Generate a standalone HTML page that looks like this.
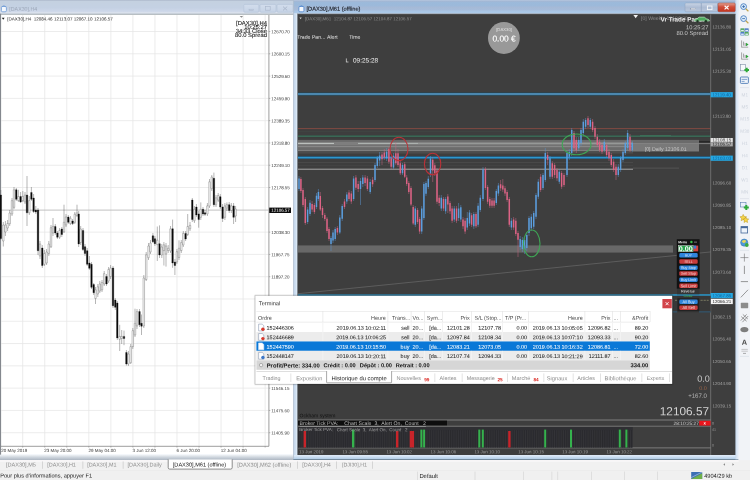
<!DOCTYPE html>
<html lang="fr">
<head>
<meta charset="utf-8">
<title>MetaTrader - [DAX30],M61 (offline)</title>
<style>
html,body{margin:0;padding:0;}
body{width:750px;height:480px;overflow:hidden;position:relative;background:#f0f0f0;}
#app{position:absolute;left:0;top:0;width:750px;height:480px;overflow:hidden;
 font-family:"Liberation Sans",sans-serif;}
#app>section,#app>aside,#app>footer,#app>div{position:absolute;left:0;top:0;width:750px;height:480px;}
#app svg{position:absolute;left:0;top:0;display:block;}
#app text{font-family:"Liberation Sans",sans-serif;white-space:pre;}
</style>
</head>
<body>
<div id="app">
<svg width="0" height="0" style="position:absolute"><defs>
<filter id="aa" filterUnits="userSpaceOnUse" x="0" y="0" width="750" height="480"><feOffset dx="0" dy="0"/></filter>
<linearGradient id="gTitle" x1="0" y1="0" x2="0" y2="1">
<stop offset="0" stop-color="#a9b5c8"/><stop offset="0.09" stop-color="#c4d1e0"/><stop offset="0.55" stop-color="#c4d1e3"/>
<stop offset="0.82" stop-color="#cdd7e9"/><stop offset="0.93" stop-color="#dce3ed"/><stop offset="1" stop-color="#dfe5ee"/>
</linearGradient>
<linearGradient id="gTitleA" x1="0" y1="0" x2="0" y2="1"><stop offset="0" stop-color="#b8c8df"/><stop offset="0.09" stop-color="#a3b7d4"/><stop offset="0.2" stop-color="#9bbadb"/><stop offset="0.42" stop-color="#9db9da"/><stop offset="0.52" stop-color="#a5b9d6"/><stop offset="0.7" stop-color="#a6bcda"/><stop offset="0.8" stop-color="#a9c6e6"/><stop offset="0.9" stop-color="#abc9e8"/><stop offset="0.95" stop-color="#c6d9ee"/><stop offset="1" stop-color="#c8daef"/></linearGradient>
<linearGradient id="gLB" x1="0" y1="0" x2="0" y2="1"><stop offset="0" stop-color="#f0f3f6"/><stop offset="0.45" stop-color="#ced5dd"/><stop offset="1" stop-color="#aab4c0"/></linearGradient>
<linearGradient id="gBF" x1="0" y1="0" x2="0" y2="1"><stop offset="0" stop-color="#e2ecf8"/><stop offset="0.35" stop-color="#d3e3f4"/><stop offset="1" stop-color="#b1cde7"/></linearGradient>
<linearGradient id="gRF" x1="0" y1="0" x2="1" y2="0"><stop offset="0" stop-color="#c6d9ee"/><stop offset="1" stop-color="#eef3fa"/></linearGradient>
<linearGradient id="gBtn" x1="0" y1="0" x2="0" y2="1">
<stop offset="0" stop-color="#c9d5e6"/><stop offset="0.5" stop-color="#adbcd3"/><stop offset="1" stop-color="#bac8dd"/>
</linearGradient>
<linearGradient id="gBtnOff" x1="0" y1="0" x2="0" y2="1">
<stop offset="0" stop-color="#d2ddec"/><stop offset="1" stop-color="#c6d3e6"/>
</linearGradient>
<linearGradient id="gClose" x1="0" y1="0" x2="0" y2="1">
<stop offset="0" stop-color="#e2a293"/><stop offset="0.45" stop-color="#cf4d39"/><stop offset="1" stop-color="#c3331f"/>
</linearGradient>
</defs></svg>

<section id="win-h4">
<svg width="750" height="480" viewBox="0 0 750 480"><g filter="url(#aa)">
<rect x="0" y="0" width="750" height="460" fill="#c9dbef"/>
<rect x="0" y="0" width="297" height="13.8" fill="url(#gTitle)"/>
<rect x="1.4" y="6.4" width="5" height="5.4" rx="1.2" fill="#f4f8fd" stroke="#6a98d4" stroke-width="0.8"/><path d="M2 6.8Q3.9 4.9 5.8 6.8" fill="none" stroke="#6a98d4" stroke-width="0.8"/>
<text x="9.3" y="10.7" font-size="5.3" fill="#9ca7b8" transform="rotate(0.03 9.3 10.7)">[DAX30],H4</text>
<rect x="243.8" y="4.4" width="15" height="7.8" rx="1" fill="url(#gBtnOff)" stroke="#b4c2d7" stroke-width="0.6"/>
<rect x="260" y="4.4" width="16" height="7.8" rx="1" fill="url(#gBtnOff)" stroke="#b4c2d7" stroke-width="0.6"/>
<rect x="277" y="4.4" width="16" height="7.8" rx="1" fill="url(#gBtnOff)" stroke="#b4c2d7" stroke-width="0.6"/>
<rect x="249" y="9.2" width="4.6" height="1.3" fill="none" stroke="#a9b6ca" stroke-width="0.5"/><rect x="265.6" y="6.6" width="4.6" height="3.6" fill="none" stroke="#a9b6ca" stroke-width="0.6"/><path d="M283 6.6L287.2 10.4M287.2 6.6L283 10.4" stroke="#a9b6ca" stroke-width="0.9" fill="none"/>
<rect x="0" y="13.7" width="293.4" height="1.2" fill="#a3aaae"/>
<rect x="0" y="14.8" width="293.4" height="440" fill="#ffffff"/>
<rect x="0" y="13.7" width="1.1" height="441.1" fill="#84888e"/>
<rect x="0" y="454.8" width="293.3" height="5.4" fill="url(#gLB)"/>
<path d="M22.7 15V445.8M44.74 15V445.8M66.78 15V445.8M88.82 15V445.8M110.86 15V445.8M132.9 15V445.8M154.94 15V445.8M176.98 15V445.8M199.02 15V445.8M221.06 15V445.8M243.1 15V445.8M265.14 15V445.8M1 31.5H268.4M1 53.79H268.4M1 76.08H268.4M1 98.37H268.4M1 120.66H268.4M1 142.95H268.4M1 165.24H268.4M1 187.53H268.4M1 232.11H268.4M1 254.4H268.4M1 276.69H268.4M1 298.98H268.4M1 321.27H268.4M1 343.56H268.4M1 365.85H268.4M1 388.14H268.4M1 410.43H268.4M1 432.72H268.4" stroke="#e5e5e5" stroke-width="0.75" fill="none"/>
<path d="M1 210.1H268.4" stroke="#b6b6b6" stroke-width="0.85"/>
<path d="M268.9 15V446.3M1 446.3H268.9" stroke="#747474" stroke-width="0.7" fill="none"/>
<path d="M268.9 31.5h1.4M268.9 53.79h1.4M268.9 76.08h1.4M268.9 98.37h1.4M268.9 120.66h1.4M268.9 142.95h1.4M268.9 165.24h1.4M268.9 187.53h1.4M268.9 209.82h1.4M268.9 232.11h1.4M268.9 254.4h1.4M268.9 276.69h1.4M268.9 298.98h1.4M268.9 321.27h1.4M268.9 343.56h1.4M268.9 365.85h1.4M268.9 388.14h1.4M268.9 410.43h1.4M268.9 432.72h1.4M22.7 446.3v1.3M44.74 446.3v1.3M66.78 446.3v1.3M88.82 446.3v1.3M110.86 446.3v1.3M132.9 446.3v1.3M154.94 446.3v1.3M176.98 446.3v1.3M199.02 446.3v1.3M221.06 446.3v1.3M243.1 446.3v1.3M265.14 446.3v1.3" stroke="#777" stroke-width="0.5" fill="none"/>
<path d="M0.8 190V240M3.3 222V246.5M5.4 221V236M7.6 220V231M9.7 210V226M12 198V216M14 187V209M16.3 188V201M18.4 189.8V202M20.6 192V203M22.8 191V202M25 192V204M27 176V226M29.3 196V215M31.4 187V201M33.6 194V213M35.8 206V214M38 208V255M40 241V259M42.3 245V268M44.4 250V266M46.6 249V265M48.8 241V256M51 225V248M53 218V236M55.3 224V235M57.4 231V239M59.6 228V239M61.8 227V237M64 204.7V233M66 214V227M68.3 215V224M70.4 216V225M72.6 219V225M74.8 212V224M77 204.7V217M78.7 211V247M80.7 226V245M83 228V251M85 244V256M87.2 248V266M89.4 256V270M91.5 262V289M93.7 283V295M95.5 287V304M97.8 284V297M99.8 281V293M102 280V292M104.2 271V286M106.5 274V286M108.6 267V283M110.6 265V279M113 266V308M115.3 298V310M117.3 301V340M119.7 324.8V351M121.7 330V344M124 330.6V345.2M126.4 350V365.6M128.4 351V366M130.7 344V364M132.8 328V349M135 308.7V337M137 309V329M139.5 309V327M141.5 314.5V335M143.8 275V328M146.2 252V281M148.5 243V260M150.5 240V254M152.9 233V243M154.9 236V246M157.3 226.5V261M159.5 225.4V258M161.8 244V258M163.9 242V265.5M166 243V266.6M168.2 245V253M170.5 226V253M172.6 219.6V267.8M174.9 259V275M176.9 249V264M179 240.3V260M181.3 240V253M183.3 231V247M185.6 231V241M187.7 214V236M190 222V231M192.3 198V222M194.4 206V223M196.4 204V217M198.7 211V227.7M200.8 202.4V220M203 207V216M205 210V216M207.4 203V216M209.5 179V208M211.8 175V191M213.9 172.6V207M216 195V207M218.2 193V202M220.3 194V209M222.6 204V222M224.9 203V220M226.9 202.4V211M229.2 202V213M231.3 203V213M233.6 203V224M235.6 206V222" stroke="#505050" stroke-width="0.42" fill="none"/>
<path d="M2.55 225h1.5v16h-1.5zM4.65 225h1.5v7h-1.5zM6.85 223.5h1.5v4.5h-1.5zM8.95 213h1.5v10.7h-1.5zM11.25 200.6h1.5v13.4h-1.5zM13.25 189.8h1.5v17.6h-1.5zM17.65 196.5h1.5v4.1h-1.5zM22.05 196.5h1.5v4.1h-1.5zM24.25 195h1.5v7h-1.5zM28.55 200.6h1.5v12.2h-1.5zM39.25 244h1.5v12h-1.5zM43.65 253.5h1.5v10.8h-1.5zM45.85 252h1.5v11h-1.5zM48.05 244h1.5v9.5h-1.5zM50.25 227.7h1.5v19h-1.5zM52.25 226.4h1.5v6.6h-1.5zM58.85 230.4h1.5v6.8h-1.5zM63.25 222.3h1.5v9.5h-1.5zM65.25 217h1.5v8h-1.5zM69.65 218.2h1.5v5.4h-1.5zM74.05 214.2h1.5v8.1h-1.5zM76.25 212.8h1.5v2.7h-1.5zM79.95 229h1.5v13.6h-1.5zM94.75 289.8h1.5v8.7h-1.5zM97.05 286.8h1.5v7.2h-1.5zM99.05 284h1.5v7h-1.5zM101.25 282.5h1.5v7.3h-1.5zM103.45 273.7h1.5v10.3h-1.5zM107.85 269.4h1.5v11.6h-1.5zM109.85 268h1.5v8.6h-1.5zM118.95 336.4h1.5v2.9h-1.5zM120.95 336.4h1.5v2.1h-1.5zM127.65 354h1.5v10h-1.5zM129.95 346.6h1.5v16.1h-1.5zM132.05 330.6h1.5v16h-1.5zM134.25 323.3h1.5v11.7h-1.5zM136.25 311.6h1.5v14.4h-1.5zM143.05 278h1.5v48h-1.5zM145.45 254.8h1.5v24.8h-1.5zM147.75 246h1.5v11.7h-1.5zM149.75 243h1.5v8.9h-1.5zM156.55 240.2h1.5v4.4h-1.5zM161.05 247h1.5v8h-1.5zM163.15 244.9h1.5v5.7h-1.5zM165.25 246h1.5v8h-1.5zM167.45 248.3h1.5v2.3h-1.5zM169.75 228.8h1.5v22.2h-1.5zM176.15 251.7h1.5v10.3h-1.5zM178.25 248.3h1.5v9.2h-1.5zM180.55 242.6h1.5v8h-1.5zM182.55 233.4h1.5v11.5h-1.5zM186.95 226.5h1.5v8h-1.5zM189.25 225.4h1.5v3.4h-1.5zM193.65 209.3h1.5v11.5h-1.5zM200.05 209.3h1.5v8h-1.5zM206.65 205.9h1.5v8h-1.5zM208.75 181.8h1.5v24.1h-1.5zM211.05 177h1.5v11.7h-1.5zM215.25 197.8h1.5v6.9h-1.5zM217.45 195.5h1.5v4.6h-1.5zM224.15 205.9h1.5v11.4h-1.5zM226.15 204.7h1.5v3.5h-1.5zM230.55 205.9h1.5v4.6h-1.5zM234.85 209h1.5v7h-1.5z" fill="#ffffff" stroke="#5c5c5c" stroke-width="0.36"/>
<path d="M0.05 195h1.5v43.5h-1.5zM15.55 189.8h1.5v9.5h-1.5zM19.85 196.5h1.5v5.5h-1.5zM26.25 195h1.5v17.8h-1.5zM30.65 192.5h1.5v6.8h-1.5zM32.85 198h1.5v13.5h-1.5zM35.05 210h1.5v2h-1.5zM37.25 210h1.5v40.7h-1.5zM41.55 248h1.5v17.6h-1.5zM54.55 226.4h1.5v6.6h-1.5zM56.65 233h1.5v4.2h-1.5zM61.05 229h1.5v5.5h-1.5zM67.55 217h1.5v5.3h-1.5zM71.85 221h1.5v2.6h-1.5zM77.95 214h1.5v30h-1.5zM82.25 230.4h1.5v19h-1.5zM84.25 246.7h1.5v6.8h-1.5zM86.45 250.7h1.5v13.6h-1.5zM88.65 263h1.5v5.3h-1.5zM90.75 264.3h1.5v23h-1.5zM92.95 284.6h1.5v8.1h-1.5zM105.75 276.6h1.5v7.4h-1.5zM112.25 268h1.5v37.8h-1.5zM114.55 300h1.5v7.3h-1.5zM116.55 303h1.5v34.9h-1.5zM123.25 336.4h1.5v2.1h-1.5zM125.65 352.5h1.5v11.5h-1.5zM138.75 311.6h1.5v13.2h-1.5zM140.75 323.3h1.5v2.9h-1.5zM152.15 235.8h1.5v5.9h-1.5zM154.15 238.7h1.5v5h-1.5zM158.75 243.7h1.5v11.3h-1.5zM171.85 228.8h1.5v34.2h-1.5zM174.15 262h1.5v3.5h-1.5zM184.85 233.4h1.5v5.6h-1.5zM191.55 200h1.5v19.6h-1.5zM195.65 207h1.5v8h-1.5zM197.95 213.9h1.5v5.7h-1.5zM202.25 209.3h1.5v4.6h-1.5zM204.25 212.8h1.5v1.4h-1.5zM213.15 178.3h1.5v26.4h-1.5zM219.55 196.7h1.5v10.3h-1.5zM221.85 207h1.5v11.5h-1.5zM228.45 204.7h1.5v5.8h-1.5zM232.85 205.9h1.5v11.4h-1.5z" fill="#0a0a0a" stroke="#0a0a0a" stroke-width="0.3"/>
<path d="M239.7 15.9h3.4l-1.7 1.9z" fill="#8a8a8a"/>
<rect x="269.2" y="207.6" width="21.8" height="5.4" fill="#0c0c0c"/>
<path d="M1.8 17.8h2.8l-1.4 2z" fill="#1a1a1a"/>
<text x="7.3" y="20.53" font-size="4.54" fill="#262626" transform="rotate(0.03 7.3 20.53)">[DAX30],H4  12084.46 12113.07 12067.10 12106.57</text>
<text x="271.2" y="33.3" font-size="4.48" fill="#3a3a3a" transform="rotate(0.03 271.2 33.3)">12670.70</text>
<text x="271.2" y="55.59" font-size="4.48" fill="#3a3a3a" transform="rotate(0.03 271.2 55.59)">12600.15</text>
<text x="271.2" y="77.88" font-size="4.48" fill="#3a3a3a" transform="rotate(0.03 271.2 77.88)">12529.60</text>
<text x="271.2" y="100.17" font-size="4.48" fill="#3a3a3a" transform="rotate(0.03 271.2 100.17)">12459.90</text>
<text x="271.2" y="122.46" font-size="4.48" fill="#3a3a3a" transform="rotate(0.03 271.2 122.46)">12389.35</text>
<text x="271.2" y="144.75" font-size="4.48" fill="#3a3a3a" transform="rotate(0.03 271.2 144.75)">12318.80</text>
<text x="271.2" y="167.04" font-size="4.48" fill="#3a3a3a" transform="rotate(0.03 271.2 167.04)">12249.10</text>
<text x="271.2" y="189.33" font-size="4.48" fill="#3a3a3a" transform="rotate(0.03 271.2 189.33)">12178.55</text>
<text x="271.2" y="233.91" font-size="4.48" fill="#3a3a3a" transform="rotate(0.03 271.2 233.91)">12038.30</text>
<text x="271.2" y="256.2" font-size="4.48" fill="#3a3a3a" transform="rotate(0.03 271.2 256.2)">11967.75</text>
<text x="271.2" y="278.49" font-size="4.48" fill="#3a3a3a" transform="rotate(0.03 271.2 278.49)">11897.20</text>
<text x="271.2" y="300.78" font-size="4.48" fill="#3a3a3a" transform="rotate(0.03 271.2 300.78)">11826.65</text>
<text x="271.2" y="323.07" font-size="4.48" fill="#3a3a3a" transform="rotate(0.03 271.2 323.07)">11756.95</text>
<text x="271.2" y="345.36" font-size="4.48" fill="#3a3a3a" transform="rotate(0.03 271.2 345.36)">11686.40</text>
<text x="271.2" y="367.65" font-size="4.48" fill="#3a3a3a" transform="rotate(0.03 271.2 367.65)">11615.85</text>
<text x="271.2" y="389.94" font-size="4.48" fill="#3a3a3a" transform="rotate(0.03 271.2 389.94)">11546.15</text>
<text x="271.2" y="412.23" font-size="4.48" fill="#3a3a3a" transform="rotate(0.03 271.2 412.23)">11475.60</text>
<text x="271.2" y="434.52" font-size="4.48" fill="#3a3a3a" transform="rotate(0.03 271.2 434.52)">11405.90</text>
<text x="271.2" y="211.8" font-size="4.48" fill="#ffffff" transform="rotate(0.03 271.2 211.8)">12106.57</text>
<text x="236" y="25" font-size="5.87" fill="#141414" stroke="#141414" stroke-width="0.08" transform="rotate(0.03 236 25)">[DAX30],H4</text>
<text x="244.15" y="29" font-size="5.87" fill="#141414" stroke="#141414" stroke-width="0.08" transform="rotate(0.03 244.15 29)">10:25:27</text>
<text x="235.67" y="33" font-size="5.87" fill="#141414" stroke="#141414" stroke-width="0.08" transform="rotate(0.03 235.67 33)">34:33 Close</text>
<text x="235.01" y="37" font-size="5.87" fill="#141414" stroke="#141414" stroke-width="0.08" transform="rotate(0.03 235.01 37)">80.0 Spread</text>
<text x="1.3" y="452.01" font-size="4.5" fill="#3a3a3a" transform="rotate(0.03 1.3 452.01)">20 May 2019</text>
<text x="44.2" y="452.01" font-size="4.5" fill="#3a3a3a" transform="rotate(0.03 44.2 452.01)">23 May 20:00</text>
<text x="88.4" y="452.01" font-size="4.5" fill="#3a3a3a" transform="rotate(0.03 88.4 452.01)">29 May 04:00</text>
<text x="132.6" y="452.01" font-size="4.5" fill="#3a3a3a" transform="rotate(0.03 132.6 452.01)">3 Jun 12:00</text>
<text x="176.4" y="452.01" font-size="4.5" fill="#3a3a3a" transform="rotate(0.03 176.4 452.01)">6 Jun 20:00</text>
<text x="220.8" y="452.01" font-size="4.5" fill="#3a3a3a" transform="rotate(0.03 220.8 452.01)">12 Jun 04:00</text>
</g></svg>
</section>
<section id="win-m61">
<svg width="750" height="480" viewBox="0 0 750 480"><g filter="url(#aa)">
<rect x="293.4" y="0" width="445.6" height="13.9" fill="url(#gTitleA)"/>
<rect x="293.3" y="0" width="0.8" height="460" fill="#aebccd"/>
<rect x="295.8" y="13.9" width="1.3" height="441.6" fill="#dbe8f5"/>
<rect x="294.1" y="455" width="444.4" height="4.1" fill="url(#gBF)"/>
<rect x="293.3" y="459" width="445.2" height="1.2" fill="#748b9e"/>
<rect x="735.3" y="0" width="3.5" height="459.3" fill="url(#gRF)"/>
<rect x="297" y="13.9" width="438.4" height="441.1" fill="#3e3e3e"/>
<rect x="297" y="13.8" width="438.4" height="0.8" fill="#555555"/>
<rect x="297" y="14" width="0.8" height="441" fill="#8d959e"/>
<rect x="298.9" y="6.4" width="5" height="5.4" rx="1" fill="#f4f8fd" stroke="#4f86cf" stroke-width="0.8"/><path d="M299.5 6.8Q301.4 4.9 303.3 6.8" fill="none" stroke="#4f86cf" stroke-width="0.8"/>
<text x="306.5" y="10.73" font-size="5.66" fill="#161b22" stroke="#161b22" stroke-width="0.1" transform="rotate(0.03 306.5 10.73)">[DAX30],M61 (offline)</text>
<rect x="685" y="3" width="16.2" height="8.8" rx="1" fill="url(#gBtn)" stroke="#8fa2be" stroke-width="0.5"/><rect x="701.4" y="3" width="16.2" height="8.8" fill="url(#gBtn)" stroke="#8fa2be" stroke-width="0.5"/><rect x="718" y="3" width="17.2" height="8.8" rx="1" fill="url(#gClose)" stroke="#a04030" stroke-width="0.5"/><rect x="690.8" y="8.2" width="4.6" height="1.4" fill="#fff" stroke="#6b7890" stroke-width="0.3"/><rect x="707.4" y="6" width="4.6" height="3.6" fill="none" stroke="#f6f8fb" stroke-width="0.9"/><path d="M724.6 5.8L728.6 9.4M728.6 5.8L724.6 9.4" stroke="#fff" stroke-width="1.2" fill="none"/>
<rect x="298" y="92.2" width="412.6" height="3.7" fill="#2b444f"/>
<rect x="298" y="93" width="412.6" height="2.1" fill="#4b87ae"/>
<rect x="298" y="128.1" width="412.6" height="1" fill="#804a42"/>
<rect x="298" y="131.5" width="412.6" height="0.6" fill="#414b44"/>
<rect x="298" y="135.1" width="412.6" height="2.2" fill="#33403a"/>
<rect x="298" y="135.6" width="412.6" height="1.1" fill="#3e7a62"/>
<rect x="640" y="135.1" width="31" height="0.6" fill="#3f7f60"/>
<rect x="298" y="151.2" width="335" height="2.4" fill="#4c4c4c"/>
<rect x="298" y="139.9" width="401" height="11.3" fill="#6b6b6b"/>
<rect x="298" y="141.9" width="335" height="3.5" fill="#7e7e7e"/>
<rect x="298" y="150.2" width="335" height="0.7" fill="#878787"/>
<rect x="298" y="142.9" width="36" height="1" fill="#c2c8c5"/>
<rect x="358" y="142.9" width="60" height="1" fill="#b2b8b5"/>
<rect x="418" y="142.9" width="215" height="1" fill="#9a9d9b"/>
<rect x="298" y="146.4" width="335" height="0.7" fill="#9c9c9c"/>
<rect x="633" y="143.2" width="66" height="8.2" fill="#797979"/>
<rect x="633" y="143" width="66" height="0.6" fill="#8a8a8a"/>
<rect x="699" y="141.3" width="12" height="1" fill="#1e1e1e"/>
<rect x="699" y="143.2" width="12" height="0.9" fill="#8a8a8a"/>
<rect x="298" y="156.2" width="412.6" height="2.8" fill="#24587a"/>
<rect x="298" y="156.9" width="412.6" height="1.4" fill="#2e97cd"/>
<rect x="298" y="162.2" width="335" height="0.5" fill="#555555"/>
<rect x="298" y="165.4" width="335" height="0.4" fill="#4c4c4c"/>
<rect x="298" y="168.7" width="335" height="1" fill="#a8a8a8"/>
<rect x="633" y="167.8" width="46" height="0.5" fill="#6a6a6a"/>
<rect x="298" y="245.4" width="375" height="7.2" fill="#686868"/>
<path d="M298 293.7L711 251.9" stroke="#646464" stroke-width="0.8" fill="none"/>
<rect x="298" y="294.4" width="412.6" height="1.3" fill="#2b90c0"/>
<path d="M299 176V191M307.6 207V224M310 200V216M316.5 193V209M318.4 189V201M331 236V251M333 230V243M335.2 227V241M339.8 215V234M342.2 204V221M346.8 192V204M353.6 176V201M360.5 178V205M362.8 175V187M370.2 179V194M375 163V182M377.3 156V168M379.6 152V166M386.6 148V161M393.5 153V169M402.5 163V175M415.3 206V227M421.7 206V234M423.9 182V220M426 181V196M428.3 176V189M430.5 156V177M441.3 195V211M445.6 197V214M454.3 206V222M458.6 203V221M460.8 205V222M467.3 212V230M469.5 210V226M473.8 212V229M478.1 203V227M480.3 195V212M483 167V201M496.3 189V205M498.4 183V196M511.4 218V230M520.2 236V250M522.4 237V252M524.6 238V254M526.8 232V251M529 216V236M531.3 214V231M533.7 211V229M536 193V219M538.3 179V199M543 173V190M545.3 148V182M550 156V179M559.3 169V184M567 151V177M569.3 149V160M571.7 128V156M578.7 137V151M581 128V146M583.3 119V135M585.6 118V129M590.3 118V129M604.3 139V152M618.3 164V177M620.6 156V172M623 149V162M625.3 141V155M627.6 130V150M632.3 141V152" stroke="#5a93cc" stroke-width="0.5" fill="none"/>
<path d="M300.9 177V193M303 188V207M305.3 197V225M312.1 201V212M314.4 203V214M320.3 192V211M322.5 206V218M324.8 213V221M327 217V233M329 227V241M337.4 226V235M344.5 199V209M349 190V201M351.3 191V204M355.9 175V190M358.2 181V192M365.1 175V186M367.4 176V191M372.6 177V187M382 152V165M384.3 149V160M388.9 147V164M391.2 156V169M395.8 142.5V165M398 149V167M400.3 161V175M404.7 162V178M406.7 175V186M408.8 181V194M411 186V206M413.2 205V225M417.5 208V224M419.6 217V234M432.7 157V182M434.8 163V176M437 168V204M439.2 195V206M443.5 197V211M447.8 194V213M450 201V214M452.1 206V223M456.5 206V223M463 217V229M465.1 218V234M471.6 213V227M476 212V228M485.4 167V190M487.6 185V204M489.8 197V208M492 198V208M494.1 198V208M500.6 180V191M502.8 179V192M505 186V196M507.1 190V202M509.3 197V227M513.6 217V230M515.8 218V236M518 231V257M540.6 174V192M547.6 152V165M552.3 161V179M554.6 163V178M557 168V181M561.6 171V189M564 173V187M574 131V152M576.3 137V153M588 116V128M592.6 119V132M595 126V139M597.3 134V147M599.6 139V152M602 143V154M606.6 143V157M609 149V161M611.3 153V167M613.6 159V172M616 164V180M630 134V152" stroke="#c86482" stroke-width="0.5" fill="none"/>
<path d="M298.28 178.6h1.45v10.4h-1.45zM306.88 209.5h1.45v12.5h-1.45zM309.28 202.7h1.45v11.3h-1.45zM315.78 195.8h1.45v11.2h-1.45zM317.68 192h1.45v7h-1.45zM330.28 238h1.45v6h-1.45zM332.28 232.5h1.45v8h-1.45zM334.48 229h1.45v10h-1.45zM339.08 217.5h1.45v14.9h-1.45zM341.48 206h1.45v12.7h-1.45zM346.08 194.6h1.45v6.9h-1.45zM352.88 178.6h1.45v20.4h-1.45zM359.78 181h1.45v8h-1.45zM362.08 177.5h1.45v6.5h-1.45zM369.48 182h1.45v10h-1.45zM374.28 165h1.45v15h-1.45zM376.58 158h1.45v8h-1.45zM378.88 155.5h1.45v5h-1.45zM385.88 151.7h1.45v6.6h-1.45zM392.78 155.8h1.45v11.7h-1.45zM401.78 165h1.45v8.3h-1.45zM414.58 208.5h1.45v16.3h-1.45zM420.98 208.5h1.45v23.1h-1.45zM423.18 184h1.45v34h-1.45zM425.28 183h1.45v10.7h-1.45zM427.58 178.8h1.45v8.2h-1.45zM429.78 158.4h1.45v16.3h-1.45zM440.58 197.7h1.45v10.8h-1.45zM444.88 199h1.45v12.3h-1.45zM453.58 208.5h1.45v10.9h-1.45zM457.88 208.5h1.45v9.5h-1.45zM460.08 207.2h1.45v12.2h-1.45zM466.58 218h1.45v9.5h-1.45zM468.78 212.6h1.45v10.8h-1.45zM473.08 214h1.45v12.2h-1.45zM477.38 205.8h1.45v19h-1.45zM479.58 197.7h1.45v12.3h-1.45zM482.28 169.3h1.45v29.7h-1.45zM495.58 191h1.45v12h-1.45zM497.68 185.5h1.45v8.1h-1.45zM510.68 220.7h1.45v6.8h-1.45zM519.48 239h1.45v8h-1.45zM521.68 240h1.45v9h-1.45zM523.88 240h1.45v10h-1.45zM526.08 235h1.45v13h-1.45zM528.28 218h1.45v15h-1.45zM530.58 216.7h1.45v11.6h-1.45zM532.98 213h1.45v13.7h-1.45zM535.28 195h1.45v21.7h-1.45zM537.58 181.7h1.45v15h-1.45zM542.28 175h1.45v13h-1.45zM544.58 153h1.45v27h-1.45zM549.28 158.3h1.45v18.4h-1.45zM558.58 171.7h1.45v10h-1.45zM566.28 153h1.45v22h-1.45zM568.58 151.7h1.45v5h-1.45zM570.98 130h1.45v23h-1.45zM577.98 140h1.45v8.3h-1.45zM580.28 130h1.45v13h-1.45zM582.58 121.7h1.45v11.3h-1.45zM584.88 120h1.45v6.7h-1.45zM589.58 120h1.45v6.7h-1.45zM603.58 141.7h1.45v8.3h-1.45zM617.58 166.7h1.45v8.3h-1.45zM619.88 158h1.45v12h-1.45zM622.28 151.7h1.45v8.3h-1.45zM624.58 143h1.45v10h-1.45zM626.88 133h1.45v15h-1.45zM631.58 143h1.45v7h-1.45z" fill="#5b9ede"/>
<path d="M300.18 179h1.45v12h-1.45zM302.28 190h1.45v15h-1.45zM304.58 199h1.45v24h-1.45zM311.38 204h1.45v5.5h-1.45zM313.68 205h1.45v7h-1.45zM319.58 196h1.45v13.5h-1.45zM321.78 208h1.45v7h-1.45zM324.08 215h1.45v4h-1.45zM326.28 218.7h1.45v12.3h-1.45zM328.28 229h1.45v10h-1.45zM336.68 228h1.45v4.5h-1.45zM343.78 201.5h1.45v5.5h-1.45zM348.28 192.4h1.45v6.6h-1.45zM350.58 193.5h1.45v8h-1.45zM355.18 177.5h1.45v10.3h-1.45zM357.48 184h1.45v5h-1.45zM364.38 177.5h1.45v5.5h-1.45zM366.68 178.6h1.45v10.4h-1.45zM371.88 179.8h1.45v4.5h-1.45zM381.28 154.5h1.45v4.7h-1.45zM383.58 152.5h1.45v5h-1.45zM388.18 149h1.45v12.7h-1.45zM390.48 158.3h1.45v8.4h-1.45zM395.08 153.3h1.45v10h-1.45zM397.28 153.3h1.45v11.7h-1.45zM399.58 163.3h1.45v10h-1.45zM403.98 164.2h1.45v12.5h-1.45zM405.98 177.4h1.45v6.6h-1.45zM408.08 183h1.45v9h-1.45zM410.28 188h1.45v16.5h-1.45zM412.48 207h1.45v16.4h-1.45zM416.78 210h1.45v12h-1.45zM418.88 219h1.45v12.6h-1.45zM431.98 159.8h1.45v10.8h-1.45zM434.08 165.2h1.45v8.1h-1.45zM436.28 170.6h1.45v31.2h-1.45zM438.48 197.7h1.45v5.4h-1.45zM442.78 199h1.45v9.5h-1.45zM447.08 196.4h1.45v8.1h-1.45zM449.28 203.1h1.45v8.2h-1.45zM451.38 208.5h1.45v12.2h-1.45zM455.78 208.5h1.45v12.2h-1.45zM462.28 219.4h1.45v6.8h-1.45zM464.38 220.7h1.45v10.9h-1.45zM470.88 215.3h1.45v9.5h-1.45zM475.28 214h1.45v12.2h-1.45zM484.68 169h1.45v19h-1.45zM486.88 187h1.45v14.8h-1.45zM489.08 199h1.45v6.8h-1.45zM491.28 200.4h1.45v5.4h-1.45zM493.38 200.4h1.45v5.4h-1.45zM499.88 184.2h1.45v4h-1.45zM502.08 185.5h1.45v4.1h-1.45zM504.28 188.2h1.45v5.4h-1.45zM506.38 192h1.45v8h-1.45zM508.58 199h1.45v25.8h-1.45zM512.88 219.4h1.45v8.1h-1.45zM515.08 220.7h1.45v13.3h-1.45zM517.28 233h1.45v6.7h-1.45zM539.88 176.7h1.45v13.3h-1.45zM546.88 155h1.45v5h-1.45zM551.58 163.3h1.45v13.4h-1.45zM553.88 165h1.45v10h-1.45zM556.28 170h1.45v8.3h-1.45zM560.88 173h1.45v13.7h-1.45zM563.28 175h1.45v10h-1.45zM573.28 133h1.45v15.3h-1.45zM575.58 140h1.45v10h-1.45zM587.28 118.3h1.45v6.7h-1.45zM591.88 121.7h1.45v8.3h-1.45zM594.28 128h1.45v8.7h-1.45zM596.58 136.7h1.45v8.3h-1.45zM598.88 141.7h1.45v8.3h-1.45zM601.28 145h1.45v6.7h-1.45zM605.88 145h1.45v10h-1.45zM608.28 151.7h1.45v6.6h-1.45zM610.58 155h1.45v10h-1.45zM612.88 161.7h1.45v8.3h-1.45zM615.28 166.7h1.45v8.3h-1.45zM629.28 136.7h1.45v13.3h-1.45z" fill="#dd6385"/>
<ellipse cx="399" cy="149" rx="9" ry="11.7" fill="none" stroke="#bb3238" stroke-width="1.1"/><ellipse cx="432.6" cy="164" rx="8.2" ry="10.8" fill="none" stroke="#bb3238" stroke-width="1.1"/><ellipse cx="576.6" cy="144.4" rx="14.4" ry="10.4" fill="none" stroke="#3fa555" stroke-width="1.1"/><ellipse cx="531.7" cy="243.4" rx="8.3" ry="13.4" fill="none" stroke="#3fa555" stroke-width="1.1"/>
<circle cx="503.9" cy="38" r="15.9" fill="#999999"/>
<path d="M710.7 14.4V455" stroke="#787878" stroke-width="0.8" fill="none"/>
<rect x="710.6" y="92.1" width="22.2" height="5.2" fill="#25a7e2"/>
<rect x="710.6" y="138" width="22.2" height="4.2" fill="#e4e4e4"/>
<rect x="710.6" y="142.2" width="22.2" height="4.2" fill="#a9a9a9"/>
<rect x="710.6" y="155.6" width="22.2" height="5.2" fill="#25a7e2"/>
<rect x="710.6" y="293" width="22.2" height="5.2" fill="#25a7e2"/>
<rect x="710.6" y="298.8" width="22.2" height="5.3" fill="#f4f4f4"/>
<rect x="672.6" y="295.4" width="38" height="17" fill="#383838"/>
<path d="M672.6 311.9h4.6M699 311.9h11.6" stroke="#2f6f98" stroke-width="0.7"/>
<path d="M675 300.3h2.2M700.5 300.3h8.2" stroke="#a3a37a" stroke-width="0.6" stroke-dasharray="2.2 0.9"/>
<rect x="676.8" y="239.2" width="22.8" height="49.6" fill="#121212"/>
<rect x="677" y="288.8" width="22.4" height="9.4" fill="#343434"/>
<rect x="677.4" y="298.2" width="21.8" height="13" fill="#222222"/>
<rect x="672.6" y="294.4" width="38" height="1.3" fill="#2b90c0"/>
<rect x="678.4" y="245.6" width="14.8" height="6" fill="#27a44c" stroke="#e4e4e4" stroke-width="0.5"/>
<rect x="693.6" y="245.6" width="4.6" height="5.8" fill="#d3413d"/><rect x="693.6" y="245.6" width="2.6" height="3" fill="#3f7fd6"/>
<circle cx="691.4" cy="242" r="1.2" fill="#37c04a"/><rect x="694" y="241.6" width="3" height="1" fill="#777"/>
<rect x="679.3" y="253.1" width="18.4" height="4.5" rx="1.3" fill="#2f86dd"/>
<rect x="679.3" y="259.3" width="18.4" height="4.5" rx="1.3" fill="#c73c3c"/>
<rect x="679.3" y="265.4" width="18.4" height="4.5" rx="1.3" fill="#2f86dd"/>
<rect x="679.3" y="271.3" width="18.4" height="4.5" rx="1.3" fill="#c73c3c"/>
<rect x="679.3" y="277.4" width="18.4" height="4.5" rx="1.3" fill="#2f86dd"/>
<rect x="679.3" y="283.6" width="18.4" height="4.5" rx="1.3" fill="#c73c3c"/>
<rect x="679.3" y="299.6" width="18.4" height="4.5" rx="1.3" fill="#2f86dd"/>
<rect x="679.3" y="305.4" width="18.4" height="4.5" rx="1.3" fill="#c73c3c"/>
<rect x="298" y="419.6" width="412.7" height="0.8" fill="#8f8f8f"/>
<rect x="298" y="420.6" width="149" height="5" fill="#0e0e0e"/>
<rect x="298" y="425.8" width="412.7" height="0.7" fill="#8a8a8a"/>
<rect x="298" y="447.5" width="412.7" height="0.8" fill="#8a8a8a"/>
<rect x="298" y="427" width="334.6" height="20.6" fill="#333337"/>
<path d="M298.6 430V447.6M300.84 430V447.6M303.07 430V447.6M305.31 430V447.6M307.54 430V447.6M309.78 430V447.6M312.01 430V447.6M314.25 430V447.6M316.48 430V447.6M318.72 430V447.6M320.95 430V447.6M323.19 430V447.6M325.42 430V447.6M327.66 430V447.6M329.89 430V447.6M332.13 430V447.6M334.36 430V447.6M336.6 430V447.6M338.83 430V447.6M341.07 430V447.6M343.3 430V447.6M345.54 430V447.6M347.77 430V447.6M350.01 430V447.6M352.24 430V447.6M354.48 430V447.6M356.71 430V447.6M358.95 430V447.6M361.18 430V447.6M363.42 430V447.6M365.65 430V447.6M367.89 430V447.6M370.12 430V447.6M372.36 430V447.6M374.59 430V447.6M376.83 430V447.6M379.06 430V447.6M381.3 430V447.6M383.53 430V447.6M385.77 430V447.6M388 430V447.6M390.24 430V447.6M392.47 430V447.6M394.71 430V447.6M396.94 430V447.6M399.18 430V447.6M401.41 430V447.6M403.65 430V447.6M405.88 430V447.6M408.12 430V447.6M410.35 430V447.6M412.59 430V447.6M414.82 430V447.6M417.06 430V447.6M419.29 430V447.6M421.53 430V447.6M423.76 430V447.6M426 430V447.6M428.23 430V447.6M430.47 430V447.6M432.7 430V447.6M434.94 430V447.6M437.17 430V447.6M439.41 430V447.6M441.64 430V447.6M443.88 430V447.6M446.11 430V447.6M448.35 430V447.6M450.58 430V447.6M452.82 430V447.6M455.05 430V447.6M457.29 430V447.6M459.52 430V447.6M461.76 430V447.6M463.99 430V447.6M466.23 430V447.6M468.46 430V447.6M470.7 430V447.6M472.93 430V447.6M475.17 430V447.6M477.4 430V447.6M479.64 430V447.6M481.87 430V447.6M484.11 430V447.6M486.34 430V447.6M488.58 430V447.6M490.81 430V447.6M493.05 430V447.6M495.28 430V447.6M497.52 430V447.6M499.75 430V447.6M501.99 430V447.6M504.22 430V447.6M506.46 430V447.6M508.69 430V447.6M510.93 430V447.6M513.16 430V447.6M515.4 430V447.6M517.63 430V447.6M519.87 430V447.6M522.1 430V447.6M524.34 430V447.6M526.57 430V447.6M528.81 430V447.6M531.04 430V447.6M533.28 430V447.6M535.51 430V447.6M537.75 430V447.6M539.98 430V447.6M542.22 430V447.6M544.45 430V447.6M546.69 430V447.6M548.92 430V447.6M551.16 430V447.6M553.39 430V447.6M555.63 430V447.6M557.86 430V447.6M560.1 430V447.6M562.33 430V447.6M564.57 430V447.6M566.8 430V447.6M569.04 430V447.6M571.27 430V447.6M573.51 430V447.6M575.74 430V447.6M577.98 430V447.6M580.21 430V447.6M582.45 430V447.6M584.68 430V447.6M586.92 430V447.6M589.15 430V447.6M591.39 430V447.6M593.62 430V447.6M595.86 430V447.6M598.09 430V447.6M600.33 430V447.6M602.56 430V447.6M604.8 430V447.6M607.03 430V447.6M609.27 430V447.6M611.5 430V447.6M613.74 430V447.6M615.97 430V447.6M618.21 430V447.6M620.44 430V447.6M622.68 430V447.6M624.91 430V447.6M627.15 430V447.6M629.38 430V447.6M631.62 430V447.6" stroke="#2a2a2e" stroke-width="1.1" fill="none"/>
<rect x="298" y="427" width="334.6" height="3.2" fill="#2f2f33"/>
<rect x="303.6" y="431" width="2.4" height="16.5" fill="#c8242a"/>
<rect x="352" y="429.6" width="2.4" height="17.9" fill="#35b24d"/>
<rect x="396" y="431" width="2.4" height="16.5" fill="#c8242a"/>
<rect x="409.7" y="431" width="4.4" height="16.5" fill="#c8242a"/>
<rect x="420.4" y="429.6" width="2" height="17.9" fill="#35b24d"/>
<rect x="423.1" y="429.6" width="2" height="17.9" fill="#35b24d"/>
<rect x="478.3" y="429.6" width="2" height="17.9" fill="#35b24d"/>
<rect x="481.8" y="429.6" width="2" height="17.9" fill="#35b24d"/>
<rect x="508.2" y="431" width="2.4" height="16.5" fill="#c8242a"/>
<rect x="544.2" y="429.6" width="2" height="17.9" fill="#35b24d"/>
<rect x="570" y="429.6" width="2" height="17.9" fill="#35b24d"/>
<rect x="618.8" y="429.6" width="2" height="17.9" fill="#35b24d"/>
<rect x="625.4" y="429.6" width="2" height="17.9" fill="#35b24d"/>
<rect x="699.2" y="420.8" width="11.4" height="4.8" fill="#e8141c"/>
<path d="M299.4 17.5h2.4l-1.2 1.8z" fill="#d0d0d0"/>
<text x="304.8" y="20.2" font-size="4.46" fill="#909090" transform="rotate(0.03 304.8 20.2)">[DAX30],M61  12104.87 12106.57 12104.87 12106.57</text>
<text x="297.2" y="38.65" font-size="5.16" fill="#e8e8e8" transform="rotate(0.03 297.2 38.65)">Trade Pan...</text>
<text x="327" y="38.65" font-size="5.16" fill="#e8e8e8" transform="rotate(0.03 327 38.65)">Alert</text>
<text x="349.2" y="38.65" font-size="5.16" fill="#e8e8e8" transform="rotate(0.03 349.2 38.65)">Time</text>
<text x="345.6" y="62.3" font-size="5.6" fill="#f0f0f0" transform="rotate(0.03 345.6 62.3)">L</text>
<text x="353" y="62.62" font-size="6.47" fill="#f0f0f0" transform="rotate(0.03 353 62.62)">09:25:28</text>
<text x="496.2" y="30.92" font-size="4.24" fill="#e2e2e2" transform="rotate(0.03 496.2 30.92)">[DAX30]</text>
<text x="492.4" y="41.41" font-size="8.42" fill="#ffffff" stroke="#fff" stroke-width="0.15" transform="rotate(0.03 492.4 41.41)">0.00 €</text>
<path d="M633.4 15h4.6l-2.3 3.2z" fill="#f2f2f2"/>
<text x="641" y="19.95" font-size="5.17" fill="#8d8d8d" transform="rotate(0.03 641 19.95)">[0] Weekly 12106.90</text>
<text x="660.6" y="21.46" font-size="6.3" fill="#ececec" font-weight="700" transform="rotate(0.03 660.6 21.46)">Vr Trade Panel</text>
<g transform="translate(692.6 16.2) scale(1.3 1.15)"><path d="M1 4.2Q1.2 2.4 3.4 2.2L5 0.8H9L10.6 2.2Q13 2.6 13 4.2Z" fill="#4faa5f" stroke="#c8e8cc" stroke-width="0.5"/><circle cx="3.8" cy="4.4" r="1" fill="#1c3a22"/><circle cx="10.2" cy="4.4" r="1" fill="#1c3a22"/></g>
<text x="686" y="29.16" font-size="5.75" fill="#c8c8c8" transform="rotate(0.03 686 29.16)">10:25:27</text>
<text x="676.4" y="35" font-size="5.87" fill="#c8c8c8" transform="rotate(0.03 676.4 35)">80.0 Spread</text>
<text x="644.7" y="150.87" font-size="5.21" fill="#c6c6c6" transform="rotate(0.03 644.7 150.87)">[0] Daily 12106.01</text>
<text x="712.6" y="28.5" font-size="4.46" fill="#a4a4a4" transform="rotate(0.03 712.6 28.5)">12136.80</text>
<text x="712.6" y="50.8" font-size="4.46" fill="#a4a4a4" transform="rotate(0.03 712.6 50.8)">12131.05</text>
<text x="712.6" y="72.8" font-size="4.46" fill="#a4a4a4" transform="rotate(0.03 712.6 72.8)">12125.30</text>
<text x="712.6" y="117.8" font-size="4.46" fill="#a4a4a4" transform="rotate(0.03 712.6 117.8)">12113.80</text>
<text x="712.6" y="184.5" font-size="4.46" fill="#a4a4a4" transform="rotate(0.03 712.6 184.5)">12096.60</text>
<text x="712.6" y="206.8" font-size="4.46" fill="#a4a4a4" transform="rotate(0.03 712.6 206.8)">12090.85</text>
<text x="712.6" y="229" font-size="4.46" fill="#a4a4a4" transform="rotate(0.03 712.6 229)">12085.10</text>
<text x="712.6" y="251.1" font-size="4.46" fill="#a4a4a4" transform="rotate(0.03 712.6 251.1)">12079.35</text>
<text x="712.6" y="273.7" font-size="4.46" fill="#a4a4a4" transform="rotate(0.03 712.6 273.7)">12073.60</text>
<text x="712.6" y="318.4" font-size="4.46" fill="#a4a4a4" transform="rotate(0.03 712.6 318.4)">12062.15</text>
<text x="712.6" y="340.6" font-size="4.46" fill="#a4a4a4" transform="rotate(0.03 712.6 340.6)">12056.40</text>
<text x="712.6" y="362.9" font-size="4.46" fill="#a4a4a4" transform="rotate(0.03 712.6 362.9)">12050.65</text>
<text x="712.6" y="385.1" font-size="4.46" fill="#a4a4a4" transform="rotate(0.03 712.6 385.1)">12044.90</text>
<text x="712.6" y="407.4" font-size="4.46" fill="#a4a4a4" transform="rotate(0.03 712.6 407.4)">12039.15</text>
<text x="712.6" y="96.3" font-size="4.46" fill="#0d5f96" transform="rotate(0.03 712.6 96.3)">12119.40</text>
<text x="712.6" y="141.6" font-size="4.46" fill="#333" transform="rotate(0.03 712.6 141.6)">12108.15</text>
<text x="712.6" y="145.8" font-size="4.46" fill="#1c1c1c" transform="rotate(0.03 712.6 145.8)">12106.57</text>
<text x="712.6" y="159.8" font-size="4.46" fill="#0d5f96" transform="rotate(0.03 712.6 159.8)">12103.03</text>
<text x="712.6" y="297.2" font-size="4.46" fill="#0d5f96" transform="rotate(0.03 712.6 297.2)">12067.85</text>
<text x="712.6" y="303" font-size="4.46" fill="#1a1a1a" transform="rotate(0.03 712.6 303)">12066.21</text>
<text x="678.2" y="243.23" font-size="3.45" fill="#f4f4f4" font-weight="700" transform="rotate(0.03 678.2 243.23)">Menu</text>
<text x="678.8" y="251.18" font-size="7.19" fill="#ffffff" font-weight="700" transform="rotate(0.03 678.8 251.18)">0.00</text>
<text x="685" y="256.52" font-size="3.4" fill="#e9eef6" transform="rotate(0.03 685 256.52)">BUY</text>
<text x="684.4" y="262.7" font-size="3.35" fill="#f3dada" transform="rotate(0.03 684.4 262.7)">SELL</text>
<text x="681.2" y="268.89" font-size="3.6" fill="#e9eef6" transform="rotate(0.03 681.2 268.89)">Buy Stop</text>
<text x="681" y="274.84" font-size="3.75" fill="#f3dada" transform="rotate(0.03 681 274.84)">Sell Stop</text>
<text x="681" y="280.91" font-size="3.65" fill="#e9eef6" transform="rotate(0.03 681 280.91)">Buy Limit</text>
<text x="680.8" y="287.16" font-size="3.8" fill="#f3dada" transform="rotate(0.03 680.8 287.16)">Sell Limit</text>
<text x="681" y="292.53" font-size="3.71" fill="#eaeaea" transform="rotate(0.03 681 292.53)">Reverse</text>
<text x="683.6" y="296.93" font-size="3.44" fill="#3fbf5a" transform="rotate(0.03 683.6 296.93)">Close</text>
<text x="682.6" y="303.18" font-size="3.86" fill="#e9eef6" transform="rotate(0.03 682.6 303.18)">All Buy</text>
<text x="682.4" y="309.05" font-size="4.06" fill="#f3dada" transform="rotate(0.03 682.4 309.05)">All Sell</text>
<text x="697.2" y="381.64" font-size="9.06" fill="#c9c9c9" transform="rotate(0.03 697.2 381.64)">0.0</text>
<text x="699.2" y="389.96" font-size="5.47" fill="#9a6448" transform="rotate(0.03 699.2 389.96)">0.0</text>
<text x="688.2" y="397.68" font-size="6.09" fill="#b6b6b6" transform="rotate(0.03 688.2 397.68)">+167.0</text>
<text x="659.8" y="415.32" font-size="11.8" fill="#d2d2d2" transform="rotate(0.03 659.8 415.32)">12106.57</text>
<text x="673.6" y="424.92" font-size="4.81" fill="#c9c9c9" transform="rotate(0.03 673.6 424.92)">28:10:25:27</text>
<text x="703.6" y="424.54" font-size="4.32" fill="#ffffff" font-weight="700" transform="rotate(0.03 703.6 424.54)">x</text>
<text x="712" y="424.39" font-size="3.6" fill="#a8a8a8" transform="rotate(0.03 712 424.39)">0</text>
<text x="712" y="430.69" font-size="3.6" fill="#9a9a9a" transform="rotate(0.03 712 430.69)">41</text>
<text x="712" y="446.49" font-size="3.6" fill="#9a9a9a" transform="rotate(0.03 712 446.49)">0</text>
<text x="299.6" y="417.3" font-size="5.02" fill="#111111" transform="rotate(0.03 299.6 417.3)">Ockham system</text>
<text x="299.6" y="424.96" font-size="5.21" fill="#b8b8b8" text-decoration="underline" transform="rotate(0.03 299.6 424.96)">Broker Tick PVA:    Chart Scale  3,  Alert On,  Count   2</text>
<text x="299.2" y="431.12" font-size="4.53" fill="#9f9f9f" transform="rotate(0.03 299.2 431.12)">Broker Tick PVA:   Chart Scale  3,  Alert On,  Count   2</text>
<text x="299" y="453.19" font-size="4.45" fill="#9c9c9c" transform="rotate(0.03 299 453.19)">13 Jun 2019</text>
<text x="342.4" y="453.19" font-size="4.45" fill="#9c9c9c" transform="rotate(0.03 342.4 453.19)">13 Jun 09:55</text>
<text x="386.4" y="453.19" font-size="4.45" fill="#9c9c9c" transform="rotate(0.03 386.4 453.19)">13 Jun 10:02</text>
<text x="430.6" y="453.19" font-size="4.45" fill="#9c9c9c" transform="rotate(0.03 430.6 453.19)">13 Jun 10:06</text>
<text x="474.4" y="453.19" font-size="4.45" fill="#9c9c9c" transform="rotate(0.03 474.4 453.19)">13 Jun 10:10</text>
<text x="518.2" y="453.19" font-size="4.45" fill="#9c9c9c" transform="rotate(0.03 518.2 453.19)">13 Jun 10:15</text>
<text x="562.2" y="453.19" font-size="4.45" fill="#9c9c9c" transform="rotate(0.03 562.2 453.19)">13 Jun 10:19</text>
<text x="606.4" y="453.19" font-size="4.45" fill="#9c9c9c" transform="rotate(0.03 606.4 453.19)">13 Jun 10:22</text>
</g></svg>
</section>
<aside id="toolbar">
<svg width="750" height="480" viewBox="0 0 750 480"><g filter="url(#aa)">
<rect x="738.6" y="0" width="11.4" height="470" fill="#f1f3f7"/>
<g transform="translate(739 0)">
<circle cx="4.6" cy="6.6" r="2.9" fill="#dcecfb" stroke="#4a7fc0" stroke-width="0.9"/><path d="M6.8 8.7L9.4 11.2" stroke="#bfa44e" stroke-width="1.2"/><path d="M3.2 6.6h2.8" stroke="#2f62a8" stroke-width="0.8"/><path d="M4.6 5.2v2.8" stroke="#2f62a8" stroke-width="0.8"/><circle cx="4.6" cy="18.6" r="2.9" fill="#dcecfb" stroke="#4a7fc0" stroke-width="0.9"/><path d="M6.8 20.7L9.4 23.2" stroke="#bfa44e" stroke-width="1.2"/><path d="M3.2 18.6h2.8" stroke="#2f62a8" stroke-width="0.8"/><rect x="1.5" y="28.4" width="3.9" height="3.3" fill="#3f9c4b"/><rect x="5.7" y="28.4" width="3.9" height="3.3" fill="#3a70bf"/><rect x="1.5" y="32.1" width="3.9" height="3.3" fill="#3a70bf"/><rect x="5.7" y="32.1" width="3.9" height="3.3" fill="#3f9c4b"/><rect x="2.1" y="29.8" width="2.7" height="1.4" fill="#e4eefa"/><rect x="6.3" y="29.8" width="2.7" height="1.4" fill="#e4eefa"/><rect x="2.1" y="33.5" width="2.7" height="1.4" fill="#e4eefa"/><rect x="6.3" y="33.5" width="2.7" height="1.4" fill="#e4eefa"/><path d="M2.6 40.4v7M2.6 47.2h6.6" stroke="#727272" stroke-width="0.6" fill="none"/><path d="M4.6 41.6v4M6.2 43v3" stroke="#727272" stroke-width="0.65"/><path d="M7 42.8l2.6 1.7l-2.6 1.7z" fill="#2fa33a"/><path d="M2.6 52.4v7M2.6 59.2h6.6" stroke="#727272" stroke-width="0.6" fill="none"/><path d="M4.6 53.6v4M6.2 55v3" stroke="#727272" stroke-width="0.65"/><path d="M7 54.8l2.6 1.7l-2.6 1.7z" fill="#2fa33a"/><rect x="1.6" y="64.4" width="5" height="6.4" fill="#f7f9fc" stroke="#7d8da6" stroke-width="0.6"/><path d="M5.4 70h4.6M7.7 67.7v4.6" stroke="#2faa3a" stroke-width="2"/><rect x="1.4" y="77" width="8" height="6.4" rx="0.8" fill="#eef3fa" stroke="#3d6faf" stroke-width="0.8"/><path d="M2.6 79.4h5.6M2.6 81.4h3" stroke="#3d6faf" stroke-width="0.6"/><path d="M1 87.6h9" stroke="#d5dbe4" stroke-width="0.6"/><path d="M1 198.6h9" stroke="#d5dbe4" stroke-width="0.6"/><rect x="1.4" y="202.6" width="5.6" height="4.4" fill="#e9f0fa" stroke="#5c7fae" stroke-width="0.6"/><path d="M4.8 207.6h5M7.3 205.1v5" stroke="#2faa3a" stroke-width="2"/><path d="M4.2 214.4l1 2.1 2.3 0.3-1.7 1.6 0.4 2.3-2-1.1-2 1.1 0.4-2.3-1.7-1.6 2.3-0.3z" fill="#f6d648" stroke="#b8921a" stroke-width="0.5"/><path d="M6.8 217l0.9 1.8 2 0.3-1.5 1.4 0.4 2-1.8-1-1.8 1 0.4-2-1.5-1.4 2-0.3z" fill="#f6d648" stroke="#b8921a" stroke-width="0.5"/><rect x="2" y="226.6" width="6.6" height="6.4" fill="#eef3fa" stroke="#44679a" stroke-width="0.8"/><rect x="2" y="226.6" width="6.6" height="1.6" fill="#44679a"/><circle cx="5.2" cy="242.6" r="3.6" fill="#4f9ad8" stroke="#2f6aa8" stroke-width="0.5"/><path d="M2.6 241.4q2.4-2.4 4.6-0.6q-0.6 2.4-2.8 2.2z" fill="#e8d45a"/><circle cx="7.8" cy="245" r="1.9" fill="#3aa845"/><path d="M1 250.4h9" stroke="#d5dbe4" stroke-width="0.6"/><path d="M5.4 253.6v8M1.4 257.6h8" stroke="#6e6e6e" stroke-width="0.6"/><path d="M5.4 265.8v8.2" stroke="#6e6e6e" stroke-width="0.7"/><path d="M1.8 281.6h7.2" stroke="#6e6e6e" stroke-width="0.7"/><path d="M1.8 297.4l7.2-7.6" stroke="#6e6e6e" stroke-width="0.7"/><rect x="1.8" y="302.8" width="7.4" height="5.4" rx="0.6" fill="#8c8c8c"/><path d="M1.8 320.6l5.8-6.2M3.4 322.2l5.8-6.2M2.2 316.6l5.4 4.6M3.8 314.4l5 4.6" stroke="#6a6a6a" stroke-width="0.65"/><ellipse cx="5.4" cy="329.6" rx="4" ry="2.7" fill="#7d7d7d"/><path d="M2.4 349.4h6.4M2.4 351.2h6.4" stroke="#999" stroke-width="0.5"/><path d="M4 353.4l3 0" stroke="#777" stroke-width="0.6"/><path d="M1 356.4h9" stroke="#d5dbe4" stroke-width="0.6"/>
</g>
<text x="741.6" y="96.55" font-size="4.6" fill="#cdd3dd" transform="rotate(0.03 741.6 96.55)">M1</text>
<text x="741.6" y="108.55" font-size="4.6" fill="#cdd3dd" transform="rotate(0.03 741.6 108.55)">M5</text>
<text x="740.33" y="120.55" font-size="4.6" fill="#cdd3dd" transform="rotate(0.03 740.33 120.55)">M15</text>
<text x="740.33" y="132.75" font-size="4.6" fill="#cdd3dd" transform="rotate(0.03 740.33 132.75)">M30</text>
<text x="741.86" y="144.95" font-size="4.6" fill="#cdd3dd" transform="rotate(0.03 741.86 144.95)">H1</text>
<text x="741.86" y="157.15" font-size="4.6" fill="#cdd3dd" transform="rotate(0.03 741.86 157.15)">H4</text>
<text x="741.86" y="169.15" font-size="4.6" fill="#cdd3dd" transform="rotate(0.03 741.86 169.15)">D1</text>
<text x="741.35" y="181.55" font-size="4.6" fill="#cdd3dd" transform="rotate(0.03 741.35 181.55)">W1</text>
<text x="741.22" y="193.55" font-size="4.6" fill="#cdd3dd" transform="rotate(0.03 741.22 193.55)">MN</text>
<text x="741.73" y="344.75" font-size="7.4" fill="#4a4a4a" font-weight="700" transform="rotate(0.03 741.73 344.75)">A</text>
</g></svg>
</aside>
<section id="terminal">
<svg width="750" height="480" viewBox="0 0 750 480"><g filter="url(#aa)">
<rect x="253.8" y="294.2" width="420" height="91.3" rx="1.6" fill="#000" fill-opacity="0.05"/>
<rect x="254.3" y="294.7" width="419" height="90.3" rx="1.1" fill="#000" fill-opacity="0.08"/>
<rect x="254.8" y="295.2" width="418" height="89.3" rx="0.6" fill="#000" fill-opacity="0.16"/>
<rect x="255.4" y="295.8" width="416.8" height="88.1" fill="#ffffff"/>
<rect x="662.4" y="299" width="9.4" height="9.3" fill="#d2434a"/>
<path d="M665.6 302.2l3 3M668.6 302.2l-3 3" stroke="#fff" stroke-width="0.9"/>
<text x="258.8" y="305.24" font-size="5.69" fill="#303030" transform="rotate(0.03 258.8 305.24)">Terminal</text>
<rect x="256.4" y="311.2" width="393.4" height="0.6" fill="#e4e4e4"/>
<rect x="256.4" y="321.8" width="393.4" height="0.6" fill="#e2e2e2"/>
<rect x="322.6" y="311" width="0.6" height="11" fill="#e2e2e2"/>
<rect x="387.6" y="311" width="0.6" height="11" fill="#e2e2e2"/>
<rect x="410.8" y="311" width="0.6" height="11" fill="#e2e2e2"/>
<rect x="424.4" y="311" width="0.6" height="11" fill="#e2e2e2"/>
<rect x="442.2" y="311" width="0.6" height="11" fill="#e2e2e2"/>
<rect x="471.2" y="311" width="0.6" height="11" fill="#e2e2e2"/>
<rect x="502.4" y="311" width="0.6" height="11" fill="#e2e2e2"/>
<rect x="528.4" y="311" width="0.6" height="11" fill="#e2e2e2"/>
<rect x="584.6" y="311" width="0.6" height="11" fill="#e2e2e2"/>
<rect x="612" y="311" width="0.6" height="11" fill="#e2e2e2"/>
<rect x="620.4" y="311" width="0.6" height="11" fill="#e2e2e2"/>
<rect x="649.8" y="311" width="0.6" height="11" fill="#e2e2e2"/>
<text x="258" y="319.75" font-size="5.45" fill="#454545" transform="rotate(0.03 258 319.75)">Ordre</text>
<text x="370.96" y="319.75" font-size="5.45" fill="#454545" transform="rotate(0.03 370.96 319.75)">Heure</text>
<text x="392" y="319.75" font-size="5.45" fill="#454545" transform="rotate(0.03 392 319.75)">Trans...</text>
<text x="412.6" y="319.75" font-size="5.45" fill="#454545" transform="rotate(0.03 412.6 319.75)">Vo...</text>
<text x="426.8" y="319.75" font-size="5.45" fill="#454545" transform="rotate(0.03 426.8 319.75)">Sym...</text>
<text x="460.41" y="319.75" font-size="5.45" fill="#454545" transform="rotate(0.03 460.41 319.75)">Prix</text>
<text x="474.6" y="319.75" font-size="5.45" fill="#454545" transform="rotate(0.03 474.6 319.75)">S/L (Stop...</text>
<text x="505" y="319.75" font-size="5.45" fill="#454545" transform="rotate(0.03 505 319.75)">T/P (Pr...</text>
<text x="567.96" y="319.75" font-size="5.45" fill="#454545" transform="rotate(0.03 567.96 319.75)">Heure</text>
<text x="601.21" y="319.75" font-size="5.45" fill="#454545" transform="rotate(0.03 601.21 319.75)">Prix</text>
<text x="613.6" y="319.75" font-size="5.45" fill="#454545" transform="rotate(0.03 613.6 319.75)">...</text>
<text x="632.04" y="319.75" font-size="5.45" fill="#454545" transform="rotate(0.03 632.04 319.75)">&amp;Profit</text>
<rect x="322.6" y="322.6" width="0.6" height="9.42" fill="#ececec"/>
<rect x="387.6" y="322.6" width="0.6" height="9.42" fill="#ececec"/>
<rect x="410.8" y="322.6" width="0.6" height="9.42" fill="#ececec"/>
<rect x="424.4" y="322.6" width="0.6" height="9.42" fill="#ececec"/>
<rect x="442.2" y="322.6" width="0.6" height="9.42" fill="#ececec"/>
<rect x="471.2" y="322.6" width="0.6" height="9.42" fill="#ececec"/>
<rect x="502.4" y="322.6" width="0.6" height="9.42" fill="#ececec"/>
<rect x="528.4" y="322.6" width="0.6" height="9.42" fill="#ececec"/>
<rect x="584.6" y="322.6" width="0.6" height="9.42" fill="#ececec"/>
<rect x="612" y="322.6" width="0.6" height="9.42" fill="#ececec"/>
<rect x="620.4" y="322.6" width="0.6" height="9.42" fill="#ececec"/>
<g transform="translate(258 323.6)"><path d="M0.6 0.5h3.6l1.6 1.6v5.2h-5.2z" fill="#ffffff" stroke="#8b9bb4" stroke-width="0.6"/><circle cx="4.9" cy="5.6" r="1.7" fill="#d8392c"/></g>
<text x="266.6" y="329.86" font-size="5.45" fill="#222222" stroke="#222222" stroke-width="0.05" transform="rotate(0.03 266.6 329.86)">152446306</text>
<text x="336.6" y="329.86" font-size="5.45" fill="#222222" stroke="#222222" stroke-width="0.05" transform="rotate(0.03 336.6 329.86)">2019.06.13 10:02:11</text>
<text x="401.22" y="329.86" font-size="5.45" fill="#222222" stroke="#222222" stroke-width="0.05" transform="rotate(0.03 401.22 329.86)">sell</text>
<text x="412.6" y="329.86" font-size="5.45" fill="#222222" stroke="#222222" stroke-width="0.05" transform="rotate(0.03 412.6 329.86)">20...</text>
<text x="429.2" y="329.86" font-size="5.45" fill="#222222" stroke="#222222" stroke-width="0.05" transform="rotate(0.03 429.2 329.86)">[da...</text>
<text x="447.07" y="329.86" font-size="5.45" fill="#222222" stroke="#222222" stroke-width="0.05" transform="rotate(0.03 447.07 329.86)">12101.28</text>
<text x="478.27" y="329.86" font-size="5.45" fill="#222222" stroke="#222222" stroke-width="0.05" transform="rotate(0.03 478.27 329.86)">12107.78</text>
<text x="516.39" y="329.86" font-size="5.45" fill="#222222" stroke="#222222" stroke-width="0.05" transform="rotate(0.03 516.39 329.86)">0.00</text>
<text x="532.79" y="329.86" font-size="5.45" fill="#222222" stroke="#222222" stroke-width="0.05" transform="rotate(0.03 532.79 329.86)">2019.06.13 10:05:05</text>
<text x="587.87" y="329.86" font-size="5.45" fill="#222222" stroke="#222222" stroke-width="0.05" transform="rotate(0.03 587.87 329.86)">12096.82</text>
<text x="613.6" y="329.86" font-size="5.45" fill="#222222" stroke="#222222" stroke-width="0.05" transform="rotate(0.03 613.6 329.86)">...</text>
<text x="634.76" y="329.86" font-size="5.45" fill="#222222" stroke="#222222" stroke-width="0.05" transform="rotate(0.03 634.76 329.86)">89.20</text>
<rect x="256.4" y="332.02" width="393.4" height="9.42" fill="#ececec"/>
<rect x="322.6" y="332.02" width="0.6" height="9.42" fill="#f7f7f7"/>
<rect x="387.6" y="332.02" width="0.6" height="9.42" fill="#f7f7f7"/>
<rect x="410.8" y="332.02" width="0.6" height="9.42" fill="#f7f7f7"/>
<rect x="424.4" y="332.02" width="0.6" height="9.42" fill="#f7f7f7"/>
<rect x="442.2" y="332.02" width="0.6" height="9.42" fill="#f7f7f7"/>
<rect x="471.2" y="332.02" width="0.6" height="9.42" fill="#f7f7f7"/>
<rect x="502.4" y="332.02" width="0.6" height="9.42" fill="#f7f7f7"/>
<rect x="528.4" y="332.02" width="0.6" height="9.42" fill="#f7f7f7"/>
<rect x="584.6" y="332.02" width="0.6" height="9.42" fill="#f7f7f7"/>
<rect x="612" y="332.02" width="0.6" height="9.42" fill="#f7f7f7"/>
<rect x="620.4" y="332.02" width="0.6" height="9.42" fill="#f7f7f7"/>
<g transform="translate(258 333.02)"><path d="M0.6 0.5h3.6l1.6 1.6v5.2h-5.2z" fill="#ffffff" stroke="#8b9bb4" stroke-width="0.6"/><circle cx="4.9" cy="5.6" r="1.7" fill="#d8392c"/></g>
<text x="266.6" y="339.28" font-size="5.45" fill="#222222" stroke="#222222" stroke-width="0.05" transform="rotate(0.03 266.6 339.28)">152446689</text>
<text x="336.19" y="339.28" font-size="5.45" fill="#222222" stroke="#222222" stroke-width="0.05" transform="rotate(0.03 336.19 339.28)">2019.06.13 10:06:25</text>
<text x="401.22" y="339.28" font-size="5.45" fill="#222222" stroke="#222222" stroke-width="0.05" transform="rotate(0.03 401.22 339.28)">sell</text>
<text x="412.6" y="339.28" font-size="5.45" fill="#222222" stroke="#222222" stroke-width="0.05" transform="rotate(0.03 412.6 339.28)">20...</text>
<text x="429.2" y="339.28" font-size="5.45" fill="#222222" stroke="#222222" stroke-width="0.05" transform="rotate(0.03 429.2 339.28)">[da...</text>
<text x="447.07" y="339.28" font-size="5.45" fill="#222222" stroke="#222222" stroke-width="0.05" transform="rotate(0.03 447.07 339.28)">12097.84</text>
<text x="478.27" y="339.28" font-size="5.45" fill="#222222" stroke="#222222" stroke-width="0.05" transform="rotate(0.03 478.27 339.28)">12108.34</text>
<text x="516.39" y="339.28" font-size="5.45" fill="#222222" stroke="#222222" stroke-width="0.05" transform="rotate(0.03 516.39 339.28)">0.00</text>
<text x="532.79" y="339.28" font-size="5.45" fill="#222222" stroke="#222222" stroke-width="0.05" transform="rotate(0.03 532.79 339.28)">2019.06.13 10:07:10</text>
<text x="587.87" y="339.28" font-size="5.45" fill="#222222" stroke="#222222" stroke-width="0.05" transform="rotate(0.03 587.87 339.28)">12093.33</text>
<text x="613.6" y="339.28" font-size="5.45" fill="#222222" stroke="#222222" stroke-width="0.05" transform="rotate(0.03 613.6 339.28)">...</text>
<text x="634.76" y="339.28" font-size="5.45" fill="#222222" stroke="#222222" stroke-width="0.05" transform="rotate(0.03 634.76 339.28)">90.20</text>
<rect x="256.4" y="341.44" width="393.4" height="9.42" fill="#0a78d7"/>
<g transform="translate(258 342.44)"><path d="M0.6 0.5h3.6l1.6 1.6v5.2h-5.2z" fill="#ffffff" stroke="#dfe9f6" stroke-width="0.6"/></g>
<text x="266.6" y="348.7" font-size="5.45" fill="#ffffff" stroke="#ffffff" stroke-width="0.05" transform="rotate(0.03 266.6 348.7)">152447590</text>
<text x="336.19" y="348.7" font-size="5.45" fill="#ffffff" stroke="#ffffff" stroke-width="0.05" transform="rotate(0.03 336.19 348.7)">2019.06.13 10:15:50</text>
<text x="400.61" y="348.7" font-size="5.45" fill="#ffffff" stroke="#ffffff" stroke-width="0.05" transform="rotate(0.03 400.61 348.7)">buy</text>
<text x="412.6" y="348.7" font-size="5.45" fill="#ffffff" stroke="#ffffff" stroke-width="0.05" transform="rotate(0.03 412.6 348.7)">20...</text>
<text x="429.2" y="348.7" font-size="5.45" fill="#ffffff" stroke="#ffffff" stroke-width="0.05" transform="rotate(0.03 429.2 348.7)">[da...</text>
<text x="447.07" y="348.7" font-size="5.45" fill="#ffffff" stroke="#ffffff" stroke-width="0.05" transform="rotate(0.03 447.07 348.7)">12083.21</text>
<text x="478.27" y="348.7" font-size="5.45" fill="#ffffff" stroke="#ffffff" stroke-width="0.05" transform="rotate(0.03 478.27 348.7)">12073.05</text>
<text x="516.39" y="348.7" font-size="5.45" fill="#ffffff" stroke="#ffffff" stroke-width="0.05" transform="rotate(0.03 516.39 348.7)">0.00</text>
<text x="532.79" y="348.7" font-size="5.45" fill="#ffffff" stroke="#ffffff" stroke-width="0.05" transform="rotate(0.03 532.79 348.7)">2019.06.13 10:16:32</text>
<text x="587.87" y="348.7" font-size="5.45" fill="#ffffff" stroke="#ffffff" stroke-width="0.05" transform="rotate(0.03 587.87 348.7)">12086.81</text>
<text x="613.6" y="348.7" font-size="5.45" fill="#ffffff" stroke="#ffffff" stroke-width="0.05" transform="rotate(0.03 613.6 348.7)">...</text>
<text x="634.76" y="348.7" font-size="5.45" fill="#ffffff" stroke="#ffffff" stroke-width="0.05" transform="rotate(0.03 634.76 348.7)">72.00</text>
<rect x="256.4" y="350.86" width="393.4" height="9.42" fill="#ececec"/>
<rect x="322.6" y="350.86" width="0.6" height="9.42" fill="#f7f7f7"/>
<rect x="387.6" y="350.86" width="0.6" height="9.42" fill="#f7f7f7"/>
<rect x="410.8" y="350.86" width="0.6" height="9.42" fill="#f7f7f7"/>
<rect x="424.4" y="350.86" width="0.6" height="9.42" fill="#f7f7f7"/>
<rect x="442.2" y="350.86" width="0.6" height="9.42" fill="#f7f7f7"/>
<rect x="471.2" y="350.86" width="0.6" height="9.42" fill="#f7f7f7"/>
<rect x="502.4" y="350.86" width="0.6" height="9.42" fill="#f7f7f7"/>
<rect x="528.4" y="350.86" width="0.6" height="9.42" fill="#f7f7f7"/>
<rect x="584.6" y="350.86" width="0.6" height="9.42" fill="#f7f7f7"/>
<rect x="612" y="350.86" width="0.6" height="9.42" fill="#f7f7f7"/>
<rect x="620.4" y="350.86" width="0.6" height="9.42" fill="#f7f7f7"/>
<g transform="translate(258 351.86)"><path d="M0.6 0.5h3.6l1.6 1.6v5.2h-5.2z" fill="#ffffff" stroke="#8b9bb4" stroke-width="0.6"/><circle cx="4.9" cy="5.6" r="1.7" fill="#3d78c9"/></g>
<text x="266.6" y="358.12" font-size="5.45" fill="#222222" stroke="#222222" stroke-width="0.05" transform="rotate(0.03 266.6 358.12)">152448147</text>
<text x="336.6" y="358.12" font-size="5.45" fill="#222222" stroke="#222222" stroke-width="0.05" transform="rotate(0.03 336.6 358.12)">2019.06.13 10:20:11</text>
<text x="400.61" y="358.12" font-size="5.45" fill="#222222" stroke="#222222" stroke-width="0.05" transform="rotate(0.03 400.61 358.12)">buy</text>
<text x="412.6" y="358.12" font-size="5.45" fill="#222222" stroke="#222222" stroke-width="0.05" transform="rotate(0.03 412.6 358.12)">20...</text>
<text x="429.2" y="358.12" font-size="5.45" fill="#222222" stroke="#222222" stroke-width="0.05" transform="rotate(0.03 429.2 358.12)">[da...</text>
<text x="447.07" y="358.12" font-size="5.45" fill="#222222" stroke="#222222" stroke-width="0.05" transform="rotate(0.03 447.07 358.12)">12107.74</text>
<text x="478.27" y="358.12" font-size="5.45" fill="#222222" stroke="#222222" stroke-width="0.05" transform="rotate(0.03 478.27 358.12)">12094.33</text>
<text x="516.39" y="358.12" font-size="5.45" fill="#222222" stroke="#222222" stroke-width="0.05" transform="rotate(0.03 516.39 358.12)">0.00</text>
<text x="532.79" y="358.12" font-size="5.45" fill="#222222" stroke="#222222" stroke-width="0.05" transform="rotate(0.03 532.79 358.12)">2019.06.13 10:21:29</text>
<text x="588.68" y="358.12" font-size="5.45" fill="#222222" stroke="#222222" stroke-width="0.05" transform="rotate(0.03 588.68 358.12)">12111.87</text>
<text x="613.6" y="358.12" font-size="5.45" fill="#222222" stroke="#222222" stroke-width="0.05" transform="rotate(0.03 613.6 358.12)">...</text>
<text x="634.76" y="358.12" font-size="5.45" fill="#222222" stroke="#222222" stroke-width="0.05" transform="rotate(0.03 634.76 358.12)">82.60</text>
<rect x="256.4" y="360.3" width="393.4" height="9.5" fill="#d6d6d6"/>
<circle cx="261.1" cy="365.1" r="1.7" fill="#f2f2f2" stroke="#8a8a8a" stroke-width="0.6"/>
<text x="266.7" y="367.4" font-size="5.86" fill="#141414" font-weight="700" transform="rotate(0.03 266.7 367.4)">Profit/Perte: 334.00</text>
<text x="323.5" y="367.32" font-size="5.64" fill="#141414" font-weight="700" transform="rotate(0.03 323.5 367.32)">Crédit : 0.00</text>
<text x="359.8" y="367.33" font-size="5.68" fill="#141414" font-weight="700" transform="rotate(0.03 359.8 367.33)">Dépôt : 0.00</text>
<text x="395.8" y="367.32" font-size="5.63" fill="#141414" font-weight="700" transform="rotate(0.03 395.8 367.32)">Retrait : 0.00</text>
<text x="630.6" y="367.37" font-size="5.79" fill="#141414" font-weight="700" transform="rotate(0.03 630.6 367.37)">334.00</text>
<rect x="256.4" y="371.4" width="415.6" height="0.6" fill="#c9c9c9"/>
<text x="262.6" y="380.02" font-size="5.37" fill="#8d8d8d" transform="rotate(0.03 262.6 380.02)">Trading</text>
<rect x="290.6" y="373.4" width="0.6" height="8.6" fill="#cfcfcf"/>
<text x="296.2" y="380.13" font-size="5.68" fill="#8d8d8d" transform="rotate(0.03 296.2 380.13)">Exposition</text>
<path d="M326.6 371.1V382.2Q326.6 382.8 327.2 382.8H391Q391.6 382.8 391.6 382.2V371.1" fill="#fff" stroke="#6f6f6f" stroke-width="0.6"/>
<text x="331.4" y="380.2" font-size="5.86" fill="#1a1a1a" transform="rotate(0.03 331.4 380.2)">Historique du compte</text>
<text x="396.4" y="380.11" font-size="5.6" fill="#8d8d8d" transform="rotate(0.03 396.4 380.11)">Nouvelles</text>
<rect x="434.6" y="373.4" width="0.6" height="8.6" fill="#cfcfcf"/>
<text x="439.6" y="380.06" font-size="5.46" fill="#8d8d8d" transform="rotate(0.03 439.6 380.06)">Alertes</text>
<rect x="461.8" y="373.4" width="0.6" height="8.6" fill="#cfcfcf"/>
<text x="466.8" y="380.04" font-size="5.42" fill="#8d8d8d" transform="rotate(0.03 466.8 380.04)">Messagerie</text>
<rect x="507" y="373.4" width="0.6" height="8.6" fill="#cfcfcf"/>
<text x="511.8" y="380.1" font-size="5.58" fill="#8d8d8d" transform="rotate(0.03 511.8 380.1)">Marché</text>
<rect x="543.6" y="373.4" width="0.6" height="8.6" fill="#cfcfcf"/>
<text x="546.8" y="380.14" font-size="5.7" fill="#8d8d8d" transform="rotate(0.03 546.8 380.14)">Signaux</text>
<rect x="572.8" y="373.4" width="0.6" height="8.6" fill="#cfcfcf"/>
<text x="577.2" y="380.04" font-size="5.43" fill="#8d8d8d" transform="rotate(0.03 577.2 380.04)">Articles</text>
<rect x="600" y="373.4" width="0.6" height="8.6" fill="#cfcfcf"/>
<text x="604.6" y="380.18" font-size="5.81" fill="#8d8d8d" transform="rotate(0.03 604.6 380.18)">Bibliothèque</text>
<rect x="641.6" y="373.4" width="0.6" height="8.6" fill="#cfcfcf"/>
<text x="646.8" y="379.96" font-size="5.19" fill="#8d8d8d" transform="rotate(0.03 646.8 379.96)">Experts</text>
<rect x="669" y="373.4" width="0.6" height="8.6" fill="#cfcfcf"/>
<text x="424.2" y="381.18" font-size="4.7" fill="#dc2a24" font-weight="700" transform="rotate(0.03 424.2 381.18)">99</text>
<text x="497.4" y="381.18" font-size="4.7" fill="#dc2a24" font-weight="700" transform="rotate(0.03 497.4 381.18)">25</text>
<text x="533.4" y="381.18" font-size="4.7" fill="#dc2a24" font-weight="700" transform="rotate(0.03 533.4 381.18)">84</text>
</g></svg>
</section>
<footer id="statusbar">
<svg width="750" height="480" viewBox="0 0 750 480"><g filter="url(#aa)">
<rect x="0" y="460.2" width="750" height="10" fill="#f1f1f1"/>
<rect x="0" y="460.2" width="738.6" height="1.5" fill="#faf8f9"/>
<rect x="0" y="470.2" width="750" height="9.8" fill="#f0f0f0"/>
<rect x="0" y="470" width="750" height="0.5" fill="#e9e9e9"/>
<text x="5.9" y="466.6" font-size="5.58" fill="#8e8e8e" transform="rotate(0.03 5.9 466.6)">[DAX30],M5</text>
<rect x="42.2" y="461.4" width="0.6" height="7.4" fill="#c4c4c4"/>
<text x="47.2" y="466.55" font-size="5.45" fill="#8e8e8e" transform="rotate(0.03 47.2 466.55)">[DAX30],H1</text>
<rect x="82.6" y="461.4" width="0.6" height="7.4" fill="#c4c4c4"/>
<text x="87.2" y="466.55" font-size="5.43" fill="#8e8e8e" transform="rotate(0.03 87.2 466.55)">[DAX30],M1</text>
<rect x="122.8" y="461.4" width="0.6" height="7.4" fill="#c4c4c4"/>
<text x="127.5" y="466.58" font-size="5.53" fill="#8e8e8e" transform="rotate(0.03 127.5 466.58)">[DAX30],Daily</text>
<path d="M168.2 459.4V467.6Q168.2 469.1 169.7 469.1H230.7Q232.2 469.1 232.2 467.6V459.4" fill="#fff" stroke="#5f5f5f" stroke-width="0.7"/>
<text x="172.8" y="466.6" font-size="5.6" fill="#161616" transform="rotate(0.03 172.8 466.6)">[DAX30],M61 (offline)</text>
<text x="237.3" y="466.63" font-size="5.68" fill="#8e8e8e" transform="rotate(0.03 237.3 466.63)">[DAX30],M62 (offline)</text>
<rect x="297.2" y="461.4" width="0.6" height="7.4" fill="#c4c4c4"/>
<text x="302.2" y="466.55" font-size="5.45" fill="#8e8e8e" transform="rotate(0.03 302.2 466.55)">[DAX30],H4</text>
<rect x="336.4" y="461.4" width="0.6" height="7.4" fill="#c4c4c4"/>
<text x="342" y="466.49" font-size="5.29" fill="#8e8e8e" transform="rotate(0.03 342 466.49)">[DJI30],H1</text>
<rect x="372.4" y="461.4" width="0.6" height="7.4" fill="#c4c4c4"/>
<path d="M725 463.2l-1.7 1.3 1.7 1.3zM732.4 463.2l1.7 1.3-1.7 1.3z" fill="#8a8a8a"/>
<text x="0.2" y="477.52" font-size="5.64" fill="#1c1c1c" transform="rotate(0.03 0.2 477.52)">Pour plus d’informations, appuyer F1</text>
<rect x="417.3" y="471.6" width="0.6" height="8.4" fill="#d2d2d2"/>
<rect x="474.7" y="471.6" width="0.6" height="8.4" fill="#d2d2d2"/>
<rect x="523.2" y="471.6" width="0.6" height="8.4" fill="#d2d2d2"/>
<rect x="551.6" y="471.6" width="0.6" height="8.4" fill="#d2d2d2"/>
<rect x="557.5" y="471.6" width="0.6" height="8.4" fill="#d2d2d2"/>
<rect x="591.3" y="471.6" width="0.6" height="8.4" fill="#d2d2d2"/>
<rect x="624" y="471.6" width="0.6" height="8.4" fill="#d2d2d2"/>
<rect x="657.2" y="471.6" width="0.6" height="8.4" fill="#d2d2d2"/>
<text x="419.4" y="477.9" font-size="5.87" fill="#1c1c1c" transform="rotate(0.03 419.4 477.9)">Default</text>
<g transform="translate(691.2 472)"><rect width="11" height="7" fill="#3c6fb4"/><path d="M0 7L11 1.2V7z" fill="#6fb04a"/><path d="M0 5.6L11 0" stroke="#dfe8f2" stroke-width="0.5"/></g>
<text x="704.2" y="477.63" font-size="5.66" fill="#1c1c1c" transform="rotate(0.03 704.2 477.63)">4904/29 kb</text>
</g></svg>
</footer>
</div>
</body>
</html>
